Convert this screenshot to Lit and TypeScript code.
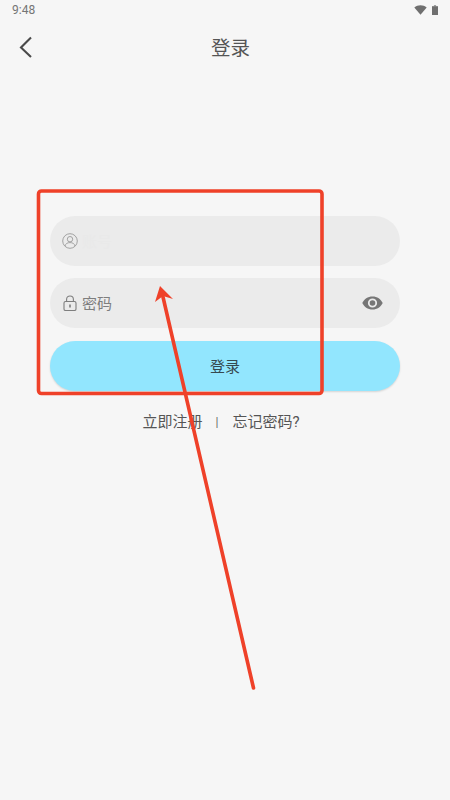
import { LitElement, html, css } from "lit";
import { customElement } from "lit/decorators.js";

@customElement("app-root")
export class AppRoot extends LitElement {
  static styles = css`
    :host {
      display: block;
      width: 450px;
      height: 800px;
      position: relative;
      overflow: hidden;
      background: #f6f6f6;
      font-family: "Roboto", "Noto Sans CJK SC", sans-serif;
    }
    .status {
      height: 19px;
      display: flex;
      align-items: center;
      justify-content: space-between;
      padding: 0 12px;
      color: #757575;
      font-size: 12px;
    }
    .status-icons {
      display: flex;
      align-items: center;
      gap: 5px;
    }
    .status-icons svg { display: block; }
    .nav {
      height: 58px;
      display: flex;
      align-items: center;
      justify-content: center;
      position: relative;
    }
    .back {
      position: absolute;
      left: 18px;
      top: 17px;
      display: block;
    }
    .title {
      font-size: 19.5px;
      color: #555;
      padding: 0 0 3px 11px;
    }
    .form {
      margin: 139px 50px 0;
      display: flex;
      flex-direction: column;
      gap: 12px;
    }
    .field {
      height: 50px;
      border-radius: 25px;
      background: #ebebeb;
      display: flex;
      align-items: center;
      padding: 0 17px 0 12px;
      gap: 4px;
      font-size: 15px;
      color: #7e7e7e;
    }
    .field .text { flex: 1; padding-bottom: 2px; }
    .field .faint { color: #e9e9e9; }
    .field svg { display: block; flex: none; }
    .button {
      height: 50px;
      margin-top: 1px;
      padding-bottom: 2px;
      box-sizing: border-box;
      border-radius: 25px;
      background: #92e6fe;
      box-shadow: 0 1px 2px rgba(0, 0, 0, 0.14);
      display: flex;
      align-items: center;
      justify-content: center;
      font-size: 15px;
      color: #36494f;
    }
    .links {
      margin-top: 20px;
      padding-right: 8px;
      display: flex;
      justify-content: center;
      align-items: center;
      font-size: 15px;
      color: #555;
      line-height: 22px;
    }
    .sep {
      margin: 0 14px 0 13px;
      font-size: 12px;
      color: #666;
    }
    .overlay {
      position: absolute;
      left: 0;
      top: 0;
      pointer-events: none;
    }
  `;

  render() {
    return html`
      <div class="status">
        <span>9:48</span>
        <div class="status-icons">
          <svg width="13" height="10" viewBox="0 0 13 10">
            <path d="M0.3 2.6 C3.8 -0.6 9.2 -0.6 12.7 2.6 L6.5 9.8 Z" fill="#6f6f6f" />
          </svg>
          <svg width="6" height="10" viewBox="0 0 6 10">
            <rect x="1.9" y="0" width="2.2" height="1.5" fill="#a0a0a0" />
            <rect x="0" y="1.2" width="6" height="8.8" fill="#6f6f6f" />
          </svg>
        </div>
      </div>
      <div class="nav">
        <svg class="back" width="16" height="22" viewBox="0 0 16 22">
          <path d="M13 1.5 L3 11.5 L13 21" fill="none" stroke="#4a4a4a" stroke-width="2.1" />
        </svg>
        <span class="title">登录</span>
      </div>
      <div class="form">
        <div class="field">
          <svg width="16" height="16" viewBox="0 0 16 16" fill="none" stroke="#a2a2a2" stroke-width="1">
            <circle cx="8" cy="8" r="7.3" />
            <circle cx="8" cy="6.2" r="2.7" />
            <path d="M3 13 C3.5 10.6 5.5 9.6 8 9.6 C10.5 9.6 12.5 10.6 13 13" />
          </svg>
          <span class="text faint">账号</span>
        </div>
        <div class="field">
          <svg width="16" height="16" viewBox="0 0 16 16" fill="none" stroke="#7e7e7e" stroke-width="1.1">
            <rect x="2" y="6.5" width="12" height="9" rx="1.6" />
            <path d="M4.6 6.5 V4.4 C4.6 2.4 6 1 8 1 C10 1 11.4 2.4 11.4 4.4 V6.5" />
            <rect x="7.2" y="9.5" width="1.6" height="3" fill="#7e7e7e" stroke="none" />
          </svg>
          <span class="text">密码</span>
          <svg width="21" height="14" viewBox="0 0 21 14">
            <path
              fill="#767676"
              fill-rule="evenodd"
              d="M10.5 0.5 C15.2 0.5 19 3.2 20.7 7 C19 10.8 15.2 13.5 10.5 13.5 C5.8 13.5 2 10.8 0.3 7 C2 3.2 5.8 0.5 10.5 0.5 Z M10.5 2.4 A4.6 4.6 0 1 0 10.5 11.6 A4.6 4.6 0 1 0 10.5 2.4 Z M10.5 4.2 A2.8 2.8 0 1 1 10.5 9.8 A2.8 2.8 0 1 1 10.5 4.2 Z"
            />
          </svg>
        </div>
        <div class="button">登录</div>
      </div>
      <div class="links">
        <span>立即注册</span>
        <span class="sep">|</span>
        <span>忘记密码?</span>
      </div>
      <svg class="overlay" width="450" height="800" viewBox="0 0 450 800" fill="none">
        <rect x="38.5" y="191" width="283.5" height="202.5" rx="3" stroke="#ef4129" stroke-width="3.6" />
        <path d="M253.5 688 L163 297" stroke="#ef4129" stroke-width="3.6" stroke-linecap="round" />
        <path d="M160 286 L173 299 L163 296 L155 302 Z" fill="#ef4129" />
      </svg>
    `;
  }
}
